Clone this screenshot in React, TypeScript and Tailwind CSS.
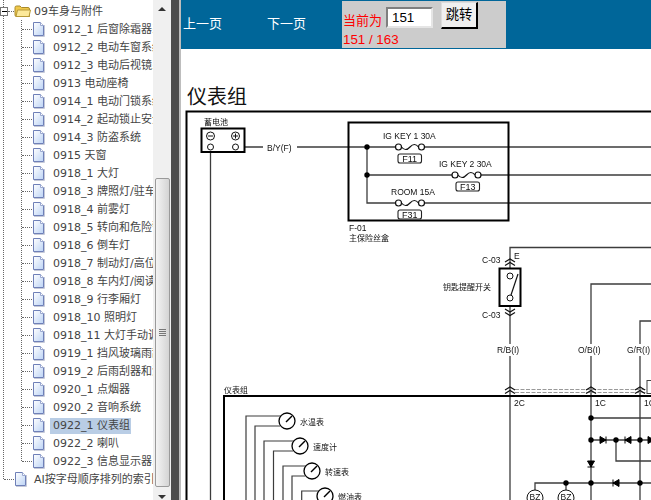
const CJK = '"DejaVu Sans","Noto Sans CJK SC",sans-serif';

const rows = [
  "0912_1 后窗除霜器系统", "0912_2 电动车窗系统", "0912_3 电动后视镜系统", "0913 电动座椅", "0914_1 电动门锁系统", "0914_2 起动锁止安全", "0914_3 防盗系统", "0915 天窗",
  "0918_1 大灯", "0918_3 牌照灯/驻车灯", "0918_4 前雾灯", "0918_5 转向和危险警告灯", "0918_6 倒车灯", "0918_7 制动灯/高位灯", "0918_8 车内灯/阅读灯", "0918_9 行李厢灯", "0918_10 照明灯", "0918_11 大灯手动调节",
  "0919_1 挡风玻璃雨刮", "0919_2 后雨刮器和洗涤", "0920_1 点烟器", "0920_2 音响系统", "0922_1 仪表组", "0922_2 喇叭", "0922_3 信息显示器系统",
];

function FileIcon() {
  return (
    <svg width="13" height="15" viewBox="0 0 13 15" className="shrink-0">
      <defs>
        <linearGradient id="fileFill" x1="0" y1="0" x2="1" y2="1">
          <stop offset="0" stopColor="#ffffff" />
          <stop offset="1" stopColor="#bcd3f5" />
        </linearGradient>
      </defs>
      <path d="M1.5 0.5H8.5L11.5 3.5V13.5H1.5Z" fill="url(#fileFill)" stroke="#6f80b8" />
      <path d="M8.5 0.5V3.5H11.5" fill="#fff" stroke="#9aa8d0" />
      <path d="M12.5 3V14.5H2" fill="none" stroke="#c5c9d8" />
    </svg>
  );
}

function FolderIcon() {
  return (
    <svg width="17" height="14" viewBox="0 0 17 14" className="shrink-0">
      <path d="M1 3.5Q1 2 2.5 2H6L7.5 3.5H14Q15.5 3.5 15.5 5V12.5H2.5Q1 12.5 1 11Z" fill="#f0c84a" stroke="#a88a2c" />
      <path d="M2 12.5L3.5 6H16.5L15 12.5Z" fill="#fce99a" stroke="#b79a38" />
    </svg>
  );
}

function Tree() {
  return (
    <div className="relative w-[153px] h-full overflow-hidden pt-[2px] text-[11px] leading-[18px] text-[#444]" style={{ fontFamily: CJK }}>
      <div className="absolute left-[3px] top-0 h-[479px] border-l border-dotted border-[#666]" />
      <div className="absolute left-[21px] top-[20px] h-[441px] border-l border-dotted border-[#666]" />
      <div className="absolute left-0 top-[7px] w-[8px] h-[9px] border border-[#777] bg-white flex items-center">
        <div className="w-[5px] h-px bg-black ml-px" />
      </div>
      <div className="flex items-center h-[18px] whitespace-nowrap">
        <div className="ml-[8px] w-[6px] border-t border-dotted border-[#666]" />
        <FolderIcon />
        <span className="ml-[3px] translate-y-[1px]">09车身与附件</span>
      </div>
      {rows.map((r) => {
        const sel = r.startsWith("0922_1");
        return (
          <div key={r} className="flex items-center h-[18px] whitespace-nowrap">
            <div className="ml-[22px] w-[10px] border-t border-dotted border-[#666] shrink-0" />
            <FileIcon />
            <span className={sel ? "ml-[5px] pl-[3px] pr-[1px] h-[16px] leading-[16px] bg-[#b9cde5] translate-y-[1px]" : "ml-[8px] translate-y-[1px]"}>{r}</span>
          </div>
        );
      })}
      <div className="flex items-center h-[18px] whitespace-nowrap">
        <div className="ml-[4px] w-[10px] border-t border-dotted border-[#666] shrink-0" />
        <FileIcon />
        <span className="ml-[7px] translate-y-[1px]">AI按字母顺序排列的索引</span>
      </div>
    </div>
  );
}

function Scrollbar() {
  return (
    <div className="w-[18px] h-full bg-[#f0f0f0] flex flex-col items-center">
      <div className="h-[178px] w-full flex justify-center pt-[7px]">
        <div className="w-0 h-0 border-x-[4px] border-x-transparent border-b-[4px] border-b-[#333]" />
      </div>
      <div className="w-[15px] h-[309px] rounded-[2px] border border-[#9a9a9a] bg-gradient-to-r from-[#f4f4f4] to-[#d4d4d4] flex flex-col items-center justify-center gap-px">
        <div className="w-[7px] h-px bg-[#777]" />
        <div className="w-[7px] h-px bg-[#777]" />
        <div className="w-[7px] h-px bg-[#777]" />
        <div className="w-[7px] h-px bg-[#777]" />
      </div>
      <div className="flex-1 w-full flex justify-center pt-[8px]">
        <div className="w-0 h-0 border-x-[4px] border-x-transparent border-t-[4px] border-t-[#333]" />
      </div>
    </div>
  );
}

const S = "#3c3c3c";

function Fuse({ x, y }: { x: number; y: number }) {
  return (
    <g>
      <rect x={x + 2} y={y - 4} width="19" height="8" fill="#fff" />
      <circle cx={x} cy={y} r="3" fill="#fff" stroke="#111" strokeWidth="1.2" />
      <circle cx={x + 23} cy={y} r="3" fill="#fff" stroke="#111" strokeWidth="1.2" />
      <path d={`M${x + 3} ${y}Q${x + 7} ${y + 5} ${x + 11.5} ${y}T${x + 20} ${y}`} fill="none" stroke="#111" strokeWidth="1.2" />
    </g>
  );
}

function Tag({ x, y, t }: { x: number; y: number; t: string }) {
  return (
    <g>
      <rect x={x} y={y} width="23.5" height="9" rx="2" fill="#fff" stroke="#222" strokeWidth="1.1" />
      <text x={x + 11.7} y={y + 7.6} textAnchor="middle" fontSize="9">{t}</text>
    </g>
  );
}

function Gauge({ x, y, t, a, b }: { x: number; y: number; t: string; a: number; b: number }) {
  return (
    <g>
      <path d={`M${a} 500V${y - 5}H${x - 5}M${b} 500V${y + 5}H${x - 7}`} fill="none" stroke={S} strokeWidth="1.2" />
      <circle cx={x} cy={y} r="8" fill="#fff" stroke="#000" strokeWidth="1.3" />
      <path d={`M${x - 1} ${y + 1}L${x + 5} ${y - 5}`} stroke="#000" strokeWidth="1.4" />
      <text x={x + 13} y={y + 3.5} fontSize="8">{t}</text>
    </g>
  );
}

function Chevrons({ x, y, up = true }: { x: number; y: number; up?: boolean }) {
  const d = up ? -3 : 3;
  return (
    <path d={`M${x - 5} ${y}L${x} ${y + d}L${x + 5} ${y}M${x - 5} ${y + 3.5}L${x} ${y + 3.5 + d}L${x + 5} ${y + 3.5}`} fill="none" stroke="#111" strokeWidth="1.2" />
  );
}

function Dot({ x, y }: { x: number; y: number }) {
  return <circle cx={x} cy={y} r="2.7" fill="#000" />;
}

function Diode({ x, y, dir }: { x: number; y: number; dir: "l" | "r" | "d" }) {
  if (dir === "r") return <path d={`M${x - 3} ${y - 3.5}L${x + 3} ${y}L${x - 3} ${y + 3.5}ZM${x + 3} ${y - 3.5}V${y + 3.5}`} fill="#000" stroke="#000" />;
  if (dir === "l") return <path d={`M${x + 3} ${y - 3.5}L${x - 3} ${y}L${x + 3} ${y + 3.5}ZM${x - 3} ${y - 3.5}V${y + 3.5}`} fill="#000" stroke="#000" />;
  return <path d={`M${x - 3.5} ${y - 3}L${x} ${y + 3}L${x + 3.5} ${y - 3}ZM${x - 3.5} ${y + 3}H${x + 3.5}`} fill="#000" stroke="#000" />;
}

function Diagram() {
  return (
    <svg width="470" height="390" viewBox="181 110 470 390" className="block blur-[0.25px]" style={{ fontFamily: '"Liberation Sans","Noto Sans CJK SC",sans-serif' }} fill="#111">
      <path d="M186.5 500V111.5H651" fill="none" stroke="#000" strokeWidth="2" />
      {/* battery */}
      <text x="204" y="125" fontSize="8">蓄电池</text>
      <path d="M210.5 150V500M238.5 147H263M297 147H651M367 147V203H399M367 175H651M420 203H651" fill="none" stroke={S} strokeWidth="1.3" />
      <rect x="201.5" y="128.5" width="43" height="23.5" fill="#fff" stroke="#000" strokeWidth="2" />
      <circle cx="210.5" cy="136" r="4" fill="none" stroke="#111" />
      <path d="M208 136H213" stroke="#111" />
      <circle cx="235.5" cy="136" r="4" fill="none" stroke="#111" />
      <path d="M233 136H238M235.5 133.5V138.5" stroke="#111" />
      <circle cx="210.5" cy="147" r="3" fill="#fff" stroke="#111" />
      <circle cx="235.5" cy="147" r="3" fill="#fff" stroke="#111" />
      <text x="267" y="151" fontSize="8.5">B/Y(F)</text>
      {/* fuse box */}
      <rect x="348.5" y="122.5" width="160" height="98" fill="none" stroke="#000" strokeWidth="2" />
      <Dot x={367} y={147} />
      <Dot x={367} y={175} />
      <Fuse x={398.5} y={147} />
      <Fuse x={455} y={175} />
      <Fuse x={398.5} y={203} />
      <text x="383" y="139" fontSize="8.5">IG KEY 1 30A</text>
      <text x="439" y="167" fontSize="8.5">IG KEY 2 30A</text>
      <text x="391" y="195" fontSize="8.5">ROOM 15A</text>
      <Tag x={398} y={154} t="F11" />
      <Tag x={456} y={182} t="F13" />
      <Tag x={398} y={210} t="F31" />
      <text x="349" y="231" fontSize="8.5">F-01</text>
      <text x="349" y="241" fontSize="8">主保险丝盒</text>
      {/* key switch */}
      <path d="M651 247.5H510V500M651 284H591V500M651 321H640V500" fill="none" stroke={S} strokeWidth="1.3" />
      <Chevrons x={510} y={262} />
      <text x="482" y="263" fontSize="8.5">C-03</text>
      <text x="514" y="259" fontSize="8.5">E</text>
      <rect x="499.5" y="268.5" width="21" height="37.5" fill="#fff" stroke="#000" strokeWidth="2" />
      <circle cx="510" cy="276" r="3" fill="#fff" stroke="#111" />
      <circle cx="510" cy="298" r="3" fill="#fff" stroke="#111" />
      <path d="M518 274L511 295" stroke="#111" strokeWidth="1.2" />
      <text x="443" y="290" fontSize="8">钥匙提醒开关</text>
      <Chevrons x={510} y={309} up={false} />
      <text x="482" y="318" fontSize="8.5">C-03</text>
      <rect x="496" y="344" width="28" height="12" fill="#fff" />
      <rect x="577" y="344" width="28" height="12" fill="#fff" />
      <rect x="626" y="344" width="25" height="12" fill="#fff" />
      <text x="497" y="353" fontSize="8.5">R/B(I)</text>
      <text x="578" y="353" fontSize="8.5">O/B(I)</text>
      <text x="627" y="353" fontSize="8.5">G/R(I)</text>
      {/* instrument cluster */}
      <text x="224" y="393" fontSize="8">仪表组</text>
      <path d="M515 389.5H651M515 392.5H651" stroke="#999" strokeDasharray="4 1.5" fill="none" />
      <Chevrons x={510} y={390} />
      <Chevrons x={591} y={390} />
      <Chevrons x={640} y={390} />
      <rect x="647" y="380.5" width="6" height="13" fill="#fff" stroke="#444" />
      <path d="M224 500V396H651" fill="none" stroke="#000" strokeWidth="2" />
      <text x="514" y="406" fontSize="8.5">2C</text>
      <text x="595" y="406" fontSize="8.5">1C</text>
      <text x="644" y="406" fontSize="8.5">1C</text>
      <Gauge x={287} y={421} t="水温表" a={246} b={255} />
      <Gauge x={300} y={446} t="速度计" a={264} b={273.5} />
      <Gauge x={312} y={471} t="转速表" a={283} b={292} />
      <Gauge x={325} y={496} t="燃油表" a={301.7} b={310} />
      {/* right-hand circuits */}
      <path d="M591 418H651M591 440H651M616 440V461H651M535 490V483H651M566 483V490" fill="none" stroke={S} strokeWidth="1.3" />
      <Dot x={591} y={418} />
      <Dot x={591} y={440} />
      <Dot x={616} y={440} />
      <Dot x={640} y={440} />
      <Dot x={591} y={483} />
      <Dot x={566} y={483} />
      <Dot x={640} y={483} />
      <Diode x={603} y={440} dir="r" />
      <Diode x={628} y={440} dir="l" />
      <Diode x={651} y={440} dir="r" />
      <Diode x={591} y={464} dir="d" />
      <Diode x={616} y={483} dir="l" />
      <circle cx="535" cy="498" r="8" fill="#fff" stroke="#111" />
      <circle cx="566" cy="498" r="8" fill="#fff" stroke="#111" />
      <text x="535" y="500" textAnchor="middle" fontSize="8.5">BZ</text>
      <text x="566" y="500" textAnchor="middle" fontSize="8.5">BZ</text>
    </svg>
  );
}

export default function App() {
  return (
    <div className="flex w-[651px] h-[500px] overflow-hidden bg-white">
      <Tree />
      <Scrollbar />
      <div className="w-[8px] h-full bg-[#4d4d4d]" />
      <div className="w-[2px] h-full bg-[#bdbdbd]" />
      <main className="flex-1 min-w-0 h-full">
        <div className="h-[49px] bg-[#006699] flex" style={{ fontFamily: '"Liberation Sans","Noto Sans CJK SC",sans-serif' }}>
          <a className="ml-[2px] mt-[15px] w-[39px] text-[13px] leading-[18px] text-white whitespace-nowrap">上一页</a>
          <a className="ml-[45px] mt-[15px] w-[39px] text-[13px] leading-[18px] text-white whitespace-nowrap">下一页</a>
          <div className="ml-[36px] mt-px w-[164px] h-[47px] bg-[#cccccc] text-[#ff0000] text-[13px] pl-px">
            <div className="flex items-start h-[29px]">
              <span className="mt-[11px] leading-[18px] whitespace-nowrap">当前为</span>
              <input readOnly value="151" className="ml-[4px] mt-[6px] w-[47px] h-[21px] bg-white text-black text-[13.33px] pl-[4px] border-2 border-t-[#7f7f7f] border-l-[#7f7f7f] border-r-[#e5e5e5] border-b-[#e5e5e5] outline-none" />
              <button className="ml-[8px] mt-px w-[37px] h-[27px] bg-[#f0f0f0] text-black text-[13.33px] border border-black border-t-[#ddd] border-l-[#ddd] border-r-2 border-b-2 leading-none">跳转</button>
            </div>
            <div className="text-[13.33px] leading-[18px] mt-px">151 / 163</div>
          </div>
        </div>
        <h1 className="pl-[6px] pt-[33px] h-[61px] text-[20px] leading-[28px] text-[#111]" style={{ fontFamily: '"Noto Sans CJK SC",sans-serif' }}>仪表组</h1>
        <Diagram />
      </main>
    </div>
  );
}
